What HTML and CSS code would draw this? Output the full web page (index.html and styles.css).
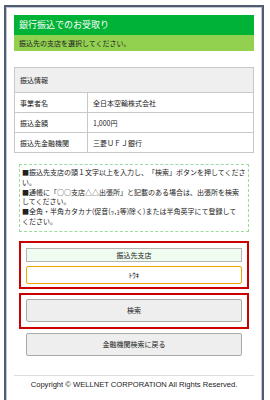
FILE: index.html
```html
<!DOCTYPE html>
<html lang="ja">
<head>
    <meta charset="UTF-8">
    <meta name="viewport" content="width=device-width, initial-scale=1.0">
    <title>銀行振込でのお受取り</title>
    <link rel="stylesheet" href="styles.css">
</head>
<body>
    <div class="frame">
        <h1 class="title">銀行振込でのお受取り</h1>
        <p class="lead">振込先の支店を選択してください。</p>

        <table class="info">
            <tr><th colspan="2">振込情報</th></tr>
            <tr><td class="key">事業者名</td><td>全日本空輸株式会社</td></tr>
            <tr><td class="key">振込金額</td><td>1,000円</td></tr>
            <tr><td class="key">振込先金融機関</td><td>三菱ＵＦＪ銀行</td></tr>
        </table>

        <div class="notice">
            <p>■振込先支店の頭１文字以上を入力し、「検索」ボタンを押してくださ<br>い。</p>
            <p>■通帳に「○○支店△△出張所」と記載のある場合は、出張所を検索<br>してください。</p>
            <p>■全角・半角カタカナ(促音(ｯ,ｮ等)除く)または半角英字にて登録して<br>ください。</p>
        </div>

        <div class="box">
            <label class="field-label" for="branch">振込先支店</label>
            <input class="field" id="branch" type="text" value="ﾄｳｷ">
        </div>

        <div class="box">
            <button class="btn">検索</button>
        </div>

        <div class="back">
            <button class="btn">金融機関検索に戻る</button>
        </div>

        <footer class="footer">Copyright © WELLNET CORPORATION All Rights Reserved.</footer>
    </div>
</body>
</html>
```

FILE: styles.css
```css
body {
    margin: 0;
    background-color: #fff;
    font-family: "Noto Sans CJK JP", "Liberation Sans", sans-serif;
    color: #222;
    text-spacing-trim: space-all;
}

.frame {
    margin: 5px 6px 0 4px;
    padding: 8px 8px 0;
    border: 2px solid #4f5d73;
    border-bottom: none;
    box-shadow: inset 1px 1px 0 #c3c8d0, inset -1px 0 0 #c3c8d0;
    height: 395px;
    box-sizing: border-box;
}

.title {
    margin: 0;
    height: 20px;
    padding-left: 5px;
    background-color: #00b236;
    color: #fff;
    font-size: 9px;
    font-weight: normal;
    line-height: 20px;
}

.lead {
    margin: 0;
    height: 16px;
    padding-left: 5px;
    background-color: #92d050;
    font-size: 7px;
    line-height: 16px;
}

.info {
    width: 100%;
    margin-top: 16px;
    border-collapse: collapse;
    font-size: 7px;
}

.info th,
.info td {
    border: 1px solid #c8c8c8;
    padding: 0 5px;
    text-align: left;
    font-weight: normal;
    height: 19px;
}

.info th {
    height: 24px;
    background-color: #efefef;
}

.info .key {
    width: 62px;
}

.notice {
    margin: 11px 5px 0;
    padding: 3px 2px 4px;
    border: 1px dashed #9ddc9d;
    font-size: 7px;
    line-height: 9.8px;
    white-space: nowrap;
}

.notice p {
    margin: 0;
}

.box {
    margin: 9px 5px 0;
    padding: 5px 5px 3px;
    border: 2px solid #cc0000;
}

.box + .box {
    margin-top: 4px;
    padding: 4px 5px 5px;
}

.field-label {
    display: block;
    height: 14px;
    background-color: #f0fcf0;
    border: 1px solid #b4b4b4;
    box-sizing: border-box;
    font-size: 7px;
    line-height: 12px;
    text-align: center;
}

.field {
    display: block;
    width: 100%;
    height: 18px;
    margin-top: 4px;
    border: 1px solid #f0a500;
    border-radius: 2px;
    box-sizing: border-box;
    font-family: inherit;
    font-size: 7px;
    text-align: center;
    outline: none;
}

.btn {
    display: block;
    width: 100%;
    height: 23px;
    background-color: #eeeeee;
    border: 1px solid #aaaaaa;
    border-radius: 2px;
    font-family: inherit;
    font-size: 7px;
    color: #222;
}

.back {
    margin: 4px 12px 0;
}

.footer {
    margin-top: 19px;
    border-top: 1px solid #dddddd;
    padding-top: 4px;
    font-family: "Liberation Sans", sans-serif;
    font-size: 7.6px;
    text-align: center;
}
```
